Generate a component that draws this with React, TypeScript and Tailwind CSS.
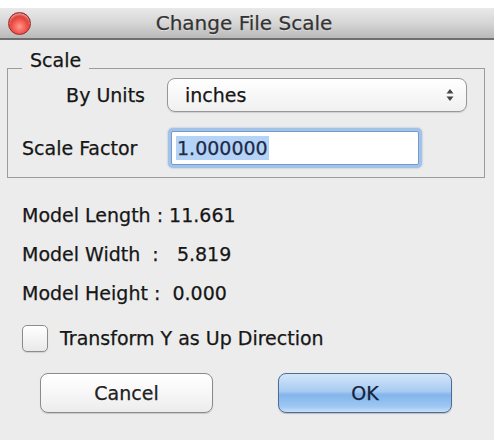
export default function App() {
  return (
    <div className="w-[494px] h-[444px] bg-white pt-[8px] font-['DejaVu_Sans',sans-serif] text-[19px] text-[#161616] [-webkit-text-stroke:0.25px_#161616]">
      <div className="h-[432px] bg-[#ececec] flex flex-col">
        {/* Title bar */}
        <div className="h-[32px] shrink-0 flex items-center bg-gradient-to-b from-[#e9e9e9] via-[#d6d6d6] to-[#b9b9b9] border-b-2 border-[#6f6f6f]">
          <div className="w-[60px] pl-[8px] flex items-center">
            <div className="w-[23px] h-[23px] rounded-full border border-[#9a2a2a] bg-[radial-gradient(circle_at_50%_65%,#ff9a8e_0%,#ef4d45_45%,#c12a24_80%,#a0201c_100%)] shadow-[inset_0_2px_2px_rgba(255,255,255,0.5)]" />
          </div>
          <div className="flex-1 text-center text-[20px] leading-[24px] text-[#333] [-webkit-text-stroke:0.25px_#333] [text-shadow:0_1px_0_rgba(255,255,255,0.6)] pr-[6px]">
            Change File Scale
          </div>
          <div className="w-[60px]" />
        </div>

        {/* Group box */}
        <div className="relative mt-[28px] ml-[7px] w-[478px] border border-[#9c9c9c] pt-[9px] pb-[9px]">
          <span className="absolute -top-[20px] left-[14px] px-[8px] bg-[#ececec] leading-[22px]">Scale</span>
          <div className="flex items-center h-[34px]">
            <div className="w-[159px] pr-[22px] text-right">By Units</div>
            <div className="w-[300px] h-[34px] rounded-[8px] border border-[#979797] bg-gradient-to-b from-[#ffffff] to-[#f0f0f0] shadow-[0_1px_1px_rgba(0,0,0,0.12)] flex items-center justify-between pl-[17px] pr-[12px]">
              <span>inches</span>
              <svg width="8" height="14" viewBox="0 0 8 14">
                <path d="M4 1 L7.5 5.5 L0.5 5.5 Z" fill="#444" />
                <path d="M4 13 L7.5 8.5 L0.5 8.5 Z" fill="#444" />
              </svg>
            </div>
          </div>
          <div className="flex items-center mt-[16px] h-[40px] pl-[14px]">
            <div className="w-[146px]">Scale Factor</div>
            <div className="w-[254px] h-[40px] rounded-[5px] bg-[#a3c2e8] p-[3px] shadow-[0_0_2px_rgba(80,130,200,0.6)]">
              <div className="h-full bg-white border border-[#7499cb] rounded-[2px] flex items-center pl-[4px]">
                <span className="bg-[#b5d3f7] text-[#1d2b48] [-webkit-text-stroke:0.25px_#1d2b48] leading-[24px] px-[1px]">1.000000</span>
              </div>
            </div>
          </div>
        </div>

        {/* Model info */}
        <div className="mt-[18px] pl-[22px] whitespace-pre">
          <div className="h-[39px] flex items-center">Model Length : 11.661</div>
          <div className="h-[39px] flex items-center">Model Width  :   5.819</div>
          <div className="h-[39px] flex items-center">Model Height :  0.000</div>
        </div>

        {/* Checkbox */}
        <div className="mt-[6px] h-[39px] pl-[22px] flex items-center">
          <div className="w-[26px] h-[27px] rounded-[5px] border border-[#8c8c8c] bg-gradient-to-b from-[#ffffff] to-[#e9e9e9] shadow-[0_1px_1px_rgba(0,0,0,0.12)]" />
          <span className="ml-[12px]">Transform Y as Up Direction</span>
        </div>

        {/* Buttons */}
        <div className="mt-[15px] pl-[40px] flex gap-[65px]">
          <div className="w-[173px] h-[40px] rounded-[8px] border border-[#8a8a8a] bg-gradient-to-b from-[#ffffff] via-[#f7f7f7] to-[#ececec] shadow-[0_1px_1px_rgba(0,0,0,0.15)] flex items-center justify-center text-[#222]">
            Cancel
          </div>
          <div className="w-[174px] h-[40px] rounded-[8px] border border-[#4d6b96] bg-[linear-gradient(to_bottom,#d3e5f9_0%,#a9ccf2_45%,#83b5ec_55%,#9dc7f2_85%,#c6e0f9_100%)] shadow-[0_1px_1px_rgba(0,0,0,0.2)] flex items-center justify-center text-[#14223a] [-webkit-text-stroke:0.25px_#14223a]">
            OK
          </div>
        </div>
      </div>
    </div>
  );
}
